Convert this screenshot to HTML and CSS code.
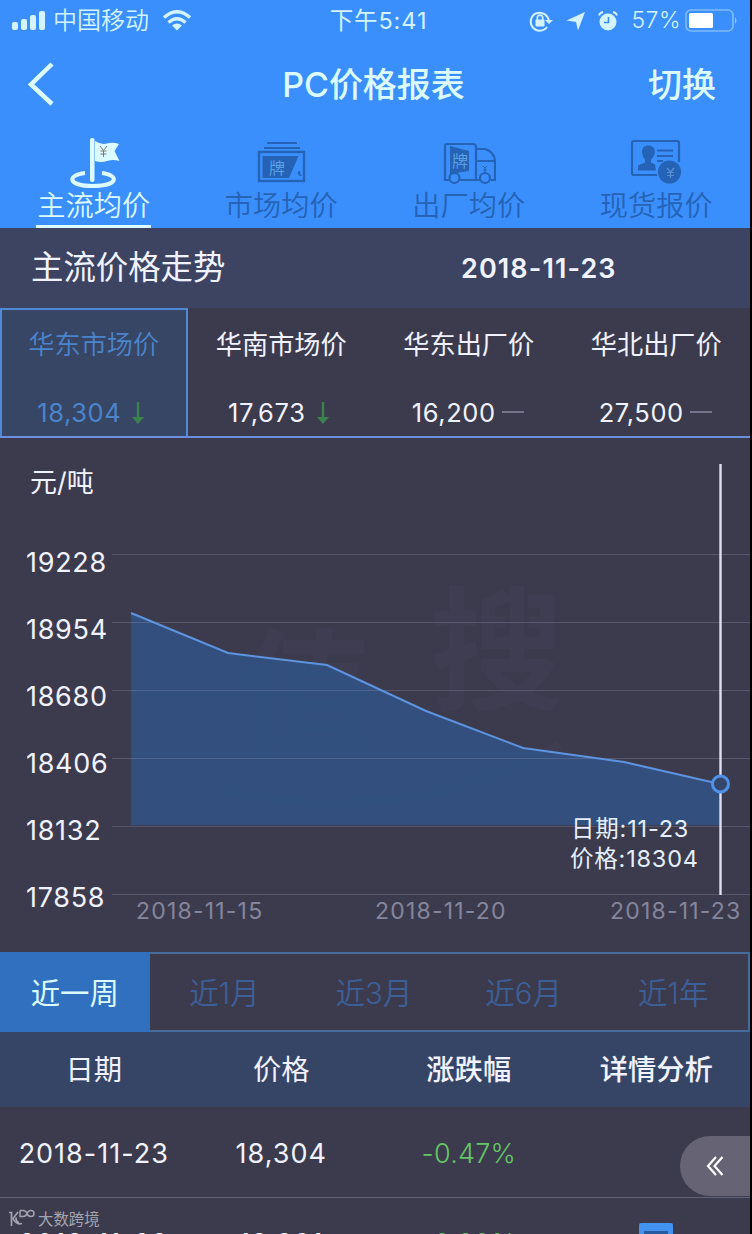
FILE: index.html
```html
<!DOCTYPE html>
<html lang="zh-CN">
<head>
    <meta charset="UTF-8">
    <meta name="viewport" content="width=device-width, initial-scale=1.0">
    <title>PC价格报表</title>
    <link rel="stylesheet" href="styles.css">
</head>
<body>
    <div class="app">
        <header class="header">
            <div class="status-bar">
                <div class="status-left">
                    <svg class="signal" width="34" height="22" viewBox="0 0 34 22" fill="currentColor">
                        <rect x="0" y="12" width="6" height="8" rx="2"/>
                        <rect x="9" y="9" width="6" height="11" rx="2"/>
                        <rect x="18" y="5" width="6" height="15" rx="2"/>
                        <rect x="27" y="1" width="6" height="19" rx="2"/>
                    </svg>
                    <span class="carrier">中国移动</span>
                    <svg class="wifi" width="30" height="22" viewBox="0 0 30 22" fill="none" stroke="currentColor" stroke-width="3.4">
                        <path d="M2 7.5Q15-4 28 7.5"/>
                        <path d="M6.5 12.5Q15 5 23.5 12.5"/>
                        <path d="M15 20.5L10 15.5Q15 11.5 20 15.5Z" fill="currentColor" stroke="none"/>
                    </svg>
                </div>
                <span class="time">下午5:41</span>
                <div class="status-right">
                    <svg width="24" height="22" viewBox="0 0 24 22" fill="none" stroke="currentColor" stroke-width="2">
                        <path d="M18 17A9 9 0 1 1 19.7 11"/>
                        <path d="M16 10h8l-4 4z" fill="currentColor" stroke="none"/>
                        <rect x="6.5" y="9.5" width="9" height="7" rx="1" fill="currentColor" stroke="none"/>
                        <path d="M8.3 10V7.8a2.7 2.7 0 0 1 5.4 0V10" stroke-width="1.6"/>
                    </svg>
                    <svg class="location" width="20" height="20" viewBox="0 0 20 20" fill="currentColor">
                        <path d="M19 1L12 19.5L10 11L0.5 9.5Z"/>
                    </svg>
                    <svg class="alarm" width="20" height="22" viewBox="0 0 20 22">
                        <circle cx="10" cy="12" r="8.5" fill="currentColor"/>
                        <path d="M1 5.5Q2 2.5 5 2M15 2Q18 2.5 19 5.5" fill="none" stroke="currentColor" stroke-width="1.8"/>
                        <path d="M10.5 7v5.5H6" fill="none" stroke="#3a8ffd" stroke-width="1.6"/>
                    </svg>
                    <span class="percent">57%</span>
                    <svg width="54" height="24" viewBox="0 0 54 24">
                        <rect x="1" y="1" width="47" height="21" rx="5" fill="none" stroke="#7fbcf8" stroke-width="1.6"/>
                        <rect x="4" y="4" width="24" height="15" rx="1.5" fill="#fff"/>
                        <path d="M50 8q3 3.5 0 7z" fill="#8fc4f8"/>
                    </svg>
                </div>
            </div>
            <div class="nav-bar">
                <svg class="back" width="30" height="46" viewBox="0 0 30 46" fill="none" stroke="currentColor" stroke-width="4.5">
                    <path d="M25 2L4 22.5L25 42"/>
                </svg>
                <h1>PC价格报表</h1>
                <span class="switch">切换</span>
            </div>
            <nav class="tabs">
                <a class="tab active">
                    <svg width="52" height="54" viewBox="0 0 52 54">
                        <path d="M17 38C-1 40-1 51 25 51S51 40 34 38" fill="none" stroke="currentColor" stroke-width="4"/>
                        <rect x="22" y="3" width="4.5" height="44" rx="2" fill="currentColor"/>
                        <path d="M27 6Q33 10 39 8.5T51 9L46.5 16L51.5 26Q45 24 39 26T27 26Z" fill="currentColor"/>
                        <path d="M32 11l3.5 4.5L39 11M35.5 15.5V22M32.5 16h6M32.5 19h6" fill="none" stroke="#777f78" stroke-width="1"/>
                    </svg>
                    <span>主流均价</span>
                </a>
                <a class="tab">
                    <svg width="52" height="54" viewBox="0 0 52 54" fill="none" stroke="currentColor" stroke-width="2">
                        <path d="M12 8h30M9 13h36"/>
                        <rect x="4" y="17" width="45" height="29" stroke-width="2.4"/>
                        <path d="M7.5 21h36L34 43H7.5Z" fill="currentColor" stroke="none"/>
                        <path d="M43 39l1.5-3v4h2" stroke-width="1.5"/>
                        <text x="14" y="39" class="tile-text">牌</text>
                    </svg>
                    <span>市场均价</span>
                </a>
                <a class="tab">
                    <svg width="54" height="54" viewBox="0 0 54 54" fill="none" stroke="currentColor" stroke-width="2.2">
                        <path d="M7 45H3V11q0-2 2-2h26q3 0 3 3v33H18"/>
                        <path d="M34 14h9q10 3 10 13v18h-4M38 45h-4M35 26h17"/>
                        <circle cx="12.5" cy="43" r="5"/>
                        <circle cx="43" cy="43" r="5"/>
                        <path d="M8 11l19 5v20L8 39Z" fill="currentColor" stroke="none"/>
                        <path d="M41 31l2 2l2-2M43 33v5M41 35h4" stroke-width="1"/>
                        <text x="10" y="32" class="tile-text">牌</text>
                    </svg>
                    <span>出厂均价</span>
                </a>
                <a class="tab">
                    <svg width="52" height="54" viewBox="0 0 52 54" fill="none" stroke="currentColor" stroke-width="2.2">
                        <path d="M27 40H4q-2 0-2-2V8q0-2 2-2h43q2 0 2 2v19"/>
                        <path d="M27 15.5h16M27 21h16M27 26h6"/>
                        <path d="M18.500 10.500c-9 0-7 10-3.500 14v3l-7 3v5h18l-1-6-4-2v-3c5-4 6-14-2.500-14Z" fill="currentColor" stroke="none"/>
                        <circle cx="39.500" cy="37" r="11.500" fill="currentColor" stroke="none"/>
                        <path d="M37 33l3.500 4l3.500-4M40.500 37v6M37 37.500h7M37 40.500h7" stroke="#5590d4" stroke-width="1.2"/>
                    </svg>
                    <span>现货报价</span>
                </a>
            </nav>
        </header>

        <section class="trend-title">
            <h2>主流价格走势</h2>
            <span class="trend-date">2018-11-23</span>
        </section>

        <section class="regions">
            <div class="region active">
                <span class="region-name">华东市场价</span>
                <div class="region-price">
                    <span>18,304</span>
                    <svg class="down" width="12" height="24" viewBox="0 0 12 24"><path d="M4.8 1h2.4v15H12L6 23L0 16h4.8Z"/></svg>
                </div>
            </div>
            <div class="region">
                <span class="region-name">华南市场价</span>
                <div class="region-price">
                    <span>17,673</span>
                    <svg class="down" width="12" height="24" viewBox="0 0 12 24"><path d="M4.8 1h2.4v15H12L6 23L0 16h4.8Z"/></svg>
                </div>
            </div>
            <div class="region">
                <span class="region-name">华东出厂价</span>
                <div class="region-price">
                    <span>16,200</span>
                    <i class="flat"></i>
                </div>
            </div>
            <div class="region">
                <span class="region-name">华北出厂价</span>
                <div class="region-price">
                    <span>27,500</span>
                    <i class="flat"></i>
                </div>
            </div>
        </section>

        <section class="chart">
            <svg width="750" height="514" viewBox="0 438 750 514">
                <g class="chart-mark">
                    <text x="238" y="742">值</text>
                    <text x="430" y="700">搜</text>
                    <path d="M225 790Q400 830 560 745"/>
                </g>
                <path class="area" d="M131 613L228 653L327 665L426 711L523 748L624 762L720 784V825H131Z"/>
                <path class="grid" d="M112 554.5H750M112 622.5H750M112 690.5H750M112 758.5H750M112 826.5H750M112 894.5H750"/>
                <path class="line" d="M131 613L228 653L327 665L426 711L523 748L624 762L720 784"/>
                <text class="unit" x="30" y="492">元/吨</text>
                <g class="y-axis">
                    <text x="26" y="572">19228</text>
                    <text x="26" y="639">18954</text>
                    <text x="26" y="706">18680</text>
                    <text x="26" y="773">18406</text>
                    <text x="26" y="840">18132</text>
                    <text x="26" y="907">17858</text>
                </g>
                <g class="x-axis">
                    <text x="136" y="919">2018-11-15</text>
                    <text x="375" y="919">2018-11-20</text>
                    <text x="610" y="919">2018-11-23</text>
                </g>
                <path class="cursor" d="M720.5 464V775M720.5 793V895"/>
                <circle class="point" cx="720.5" cy="784" r="8"/>
                <g class="tip">
                    <text x="571" y="837">日期:11-23</text>
                    <text x="570" y="867">价格:18304</text>
                </g>
            </svg>
        </section>

        <section class="periods">
            <span class="period active">近一周</span>
            <span class="period">近1月</span>
            <span class="period">近3月</span>
            <span class="period">近6月</span>
            <span class="period">近1年</span>
        </section>

        <section class="table">
            <div class="row head">
                <span>日期</span>
                <span>价格</span>
                <span class="bold">涨跌幅</span>
                <span class="bold">详情分析</span>
            </div>
            <div class="row">
                <span>2018-11-23</span>
                <span>18,304</span>
                <span class="fall">-0.47%</span>
                <span></span>
            </div>
            <div class="row next">
                <span>2018-11-22</span>
                <span>18,391</span>
                <span class="fall">-0.30%</span>
                <span><i class="doc"></i></span>
            </div>
        </section>

        <div class="drawer">
            <svg width="18" height="20" viewBox="0 0 18 20" fill="none" stroke="#fff" stroke-width="2.2">
                <path d="M10 1L2 10L10 19M16.5 1L8.5 10L16.5 19"/>
            </svg>
        </div>

        <div class="brand">
            <svg width="28" height="18" viewBox="0 0 28 18" fill="none" stroke="currentColor" stroke-width="1.7">
                <path d="M1 3.5h2.5V17M10 3L5 9.5Q8 16 14 14.5M8 8.5Q8 13 11 13.5"/>
                <path d="M12 1.5v6H15Q18 7.5 19 4.5T23 1.5Q26 1.5 26 4.5T23 7.5T19 4.5T15 1.5H12" stroke-width="1.5"/>
            </svg>
            <span>大数跨境</span>
        </div>
    </div>
</body>
</html>
```

FILE: styles.css
```css
* {
    box-sizing: border-box;
}
body {
    margin: 0;
    background: #000;
    font-family: Inter, "Noto Sans CJK SC", sans-serif;
    color: #f1f2ff;
    overflow: hidden;
}
h1, h2 {
    margin: 0;
}
svg {
    display: block;
    flex-shrink: 0;
}
.app {
    position: relative;
    width: 750px;
    height: 1234px;
    overflow: hidden;
    background: #3c3b4d;
}

/* header */
.header {
    height: 228px;
    background: #3a8ffd;
    color: #dcfbff;
}
.status-bar {
    display: grid;
    grid-template-columns: 1fr auto 1fr;
    align-items: center;
    height: 41px;
    padding: 0 11px 0 12px;
    font-size: 24px;
    line-height: 41px;
    color: #d3f3ff;
}
.status-left, .status-right {
    display: flex;
    align-items: center;
}
.carrier {
    margin: 0 13px 0 7px;
    font-weight: 350;
}
.time {
    margin-left: 6px;
    font-size: 23.5px;
    letter-spacing: 0.9px;
}
.status-right {
    justify-content: flex-end;
}
.location {
    margin: 0 12px 0 13px;
}
.alarm {
    margin-right: 13px;
}
.percent {
    margin-right: 4px;
    font-size: 23px;
    font-weight: 350;
    letter-spacing: 0.5px;
}
.nav-bar {
    display: grid;
    grid-template-columns: 1fr auto 1fr;
    align-items: center;
    height: 87px;
    padding: 0 34px 0 27px;
}
h1 {
    padding: 1px 0 0 4px;
    font-size: 34px;
    font-weight: 500;
    line-height: 84px;
}
.switch {
    justify-self: end;
    padding-top: 1px;
    font-size: 34px;
    font-weight: 500;
    line-height: 84px;
}
.tabs {
    display: flex;
    height: 100px;
    padding-top: 7px;
}
.tab {
    width: 187.5px;
    display: flex;
    flex-direction: column;
    align-items: center;
    color: #2463b5;
}
.tab span {
    width: 115px;
    height: 39px;
    font-size: 28.2px;
    font-weight: 350;
    line-height: 35px;
    text-align: center;
    border-bottom: 3px solid transparent;
}
.tab.active {
    color: #dcfbff;
}
.tab.active span {
    border-color: #dcfbff;
}
.tile-text {
    font-size: 16px;
    fill: #5c9fe6;
    stroke: none;
}

/* price trend */
.trend-title {
    display: flex;
    align-items: center;
    height: 80px;
    padding-left: 31px;
    background: #3c4462;
}
h2 {
    width: 430px;
    font-size: 32.4px;
    font-weight: 400;
    line-height: 80px;
}
.trend-date {
    font-size: 27px;
    font-weight: 600;
    letter-spacing: 1.1px;
}
.regions {
    display: flex;
    height: 130px;
    border-bottom: 2px solid #6b8fdc;
}
.region {
    width: 187.5px;
    padding-top: 19px;
    text-align: center;
}
.region.active {
    padding-top: 17px;
    color: #4c84cc;
    background: #364664;
    border: 2px solid #5089d8;
    border-bottom: none;
}
.region-name {
    display: block;
    font-size: 26.2px;
    line-height: 36px;
}
.region.active .region-name {
    font-weight: 350;
}
.region-price {
    display: flex;
    align-items: center;
    justify-content: center;
    height: 40px;
    margin-top: 29px;
    padding-right: 2px;
    font-size: 25.5px;
    letter-spacing: 0.6px;
}
.down {
    margin: 2px 4px 0 11px;
    fill: #3c824f;
}
.flat {
    width: 22px;
    height: 2px;
    margin-left: 6px;
    background: #74758a;
}

/* chart */
.chart {
    height: 514px;
}
.chart-mark {
    font-size: 134px;
    font-weight: 700;
    fill: #5f5a86;
    opacity: 0.08;
}
.chart-mark path {
    fill: none;
    stroke: #5f5a86;
    stroke-width: 9;
}
.area {
    fill: #2d5891;
    fill-opacity: 0.7;
}
.grid {
    stroke: #9799ba;
    stroke-opacity: 0.28;
}
.line {
    fill: none;
    stroke: #5e94df;
    stroke-width: 2;
}
.unit {
    font-size: 27px;
    fill: #f1f2ff;
}
.y-axis {
    font-size: 27px;
    letter-spacing: 0.7px;
    fill: #f1f2ff;
}
.x-axis {
    font-size: 23px;
    letter-spacing: 1.2px;
    fill: #85859b;
}
.cursor {
    stroke: #dedff2;
    stroke-width: 2.4;
}
.point {
    fill: #34466a;
    stroke: #4f91e8;
    stroke-width: 3;
}
.tip {
    font-size: 23.5px;
    letter-spacing: 0.8px;
    fill: #e5efff;
}

/* period switch */
.periods {
    display: flex;
    height: 80px;
    border: 2px solid #476a9c;
    border-left: none;
}
.period {
    width: 150px;
    font-size: 29.4px;
    font-weight: 350;
    line-height: 80px;
    text-align: center;
    color: #3d5f97;
}
.period.active {
    margin: -2px 0;
    line-height: 84px;
    font-weight: 400;
    color: #dcfbff;
    background: #3070bf;
}

/* table */
.row {
    display: flex;
    align-items: center;
    height: 91px;
    padding-top: 2px;
    border-bottom: 1px solid #62647a;
    font-size: 27px;
    letter-spacing: 1px;
}
.row > span {
    width: 187.5px;
    text-align: center;
}
.row.head {
    height: 75px;
    padding: 0 0 5px;
    font-size: 28.3px;
    letter-spacing: 0;
    background: #364566;
    border-bottom: none;
}
.row.next {
    padding-top: 0;
}
.row .bold {
    font-weight: 500;
}
.row .fall {
    color: #64c466;
    font-weight: 350;
    letter-spacing: 0.2px;
}
.doc {
    display: block;
    width: 34px;
    height: 40px;
    margin: 0 auto;
    border: 7px solid #4292f0;
    border-width: 8px 5px;
    border-radius: 2px;
    background: #275b9f;
}
.drawer {
    position: absolute;
    right: 0;
    top: 1136px;
    width: 70px;
    height: 60px;
    padding: 20px 0 0 26px;
    border-radius: 30px 0 0 30px;
    background: #656374;
}
.brand {
    position: absolute;
    left: 8px;
    top: 1209px;
    display: flex;
    gap: 2px;
    font-size: 15.4px;
    line-height: 22px;
    color: #a3a4b1;
}
```
